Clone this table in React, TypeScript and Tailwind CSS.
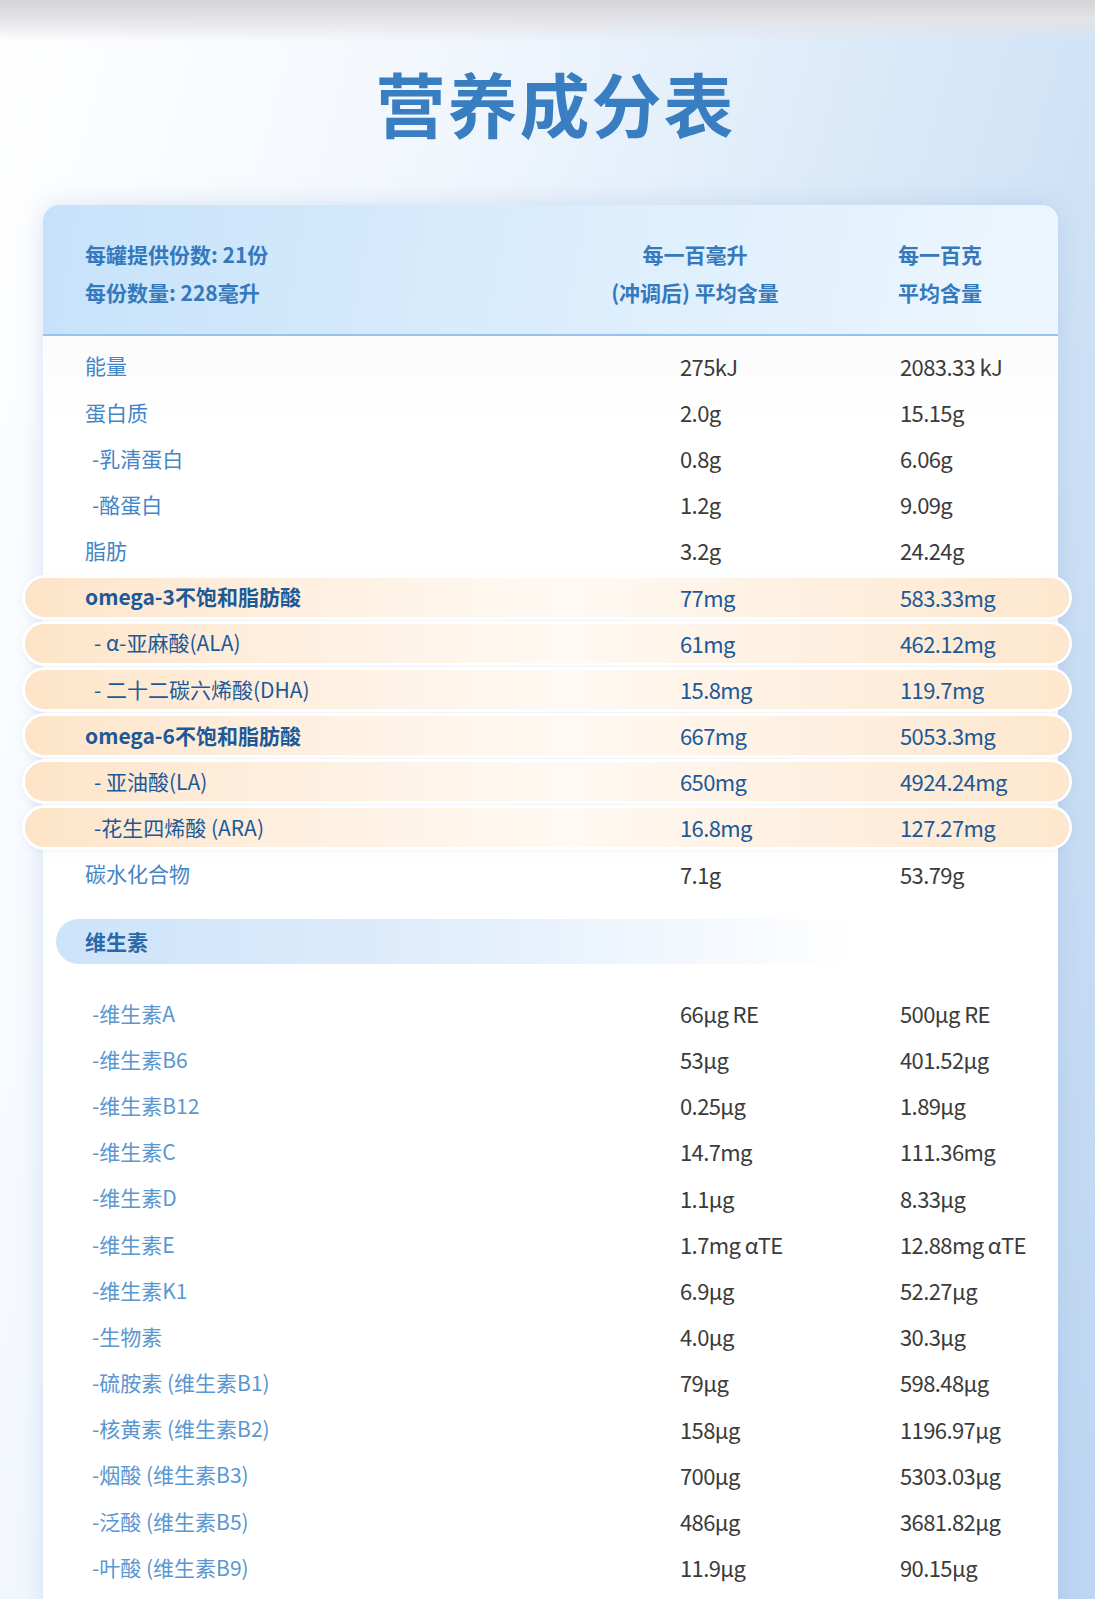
import React from "react";

type Row = {
  label: string;
  per100ml: string;
  per100g: string;
  indent?: boolean;
  bold?: boolean;
};

const nutrients: Row[] = [
  { label: "能量", per100ml: "275kJ", per100g: "2083.33 kJ" },
  { label: "蛋白质", per100ml: "2.0g", per100g: "15.15g" },
  { label: "-乳清蛋白", per100ml: "0.8g", per100g: "6.06g", indent: true },
  { label: "-酪蛋白", per100ml: "1.2g", per100g: "9.09g", indent: true },
  { label: "脂肪", per100ml: "3.2g", per100g: "24.24g" },
];

const fattyAcids: Row[] = [
  { label: "omega-3不饱和脂肪酸", per100ml: "77mg", per100g: "583.33mg", bold: true },
  { label: "- α-亚麻酸(ALA)", per100ml: "61mg", per100g: "462.12mg", indent: true },
  { label: "- 二十二碳六烯酸(DHA)", per100ml: "15.8mg", per100g: "119.7mg", indent: true },
  { label: "omega-6不饱和脂肪酸", per100ml: "667mg", per100g: "5053.3mg", bold: true },
  { label: "- 亚油酸(LA)", per100ml: "650mg", per100g: "4924.24mg", indent: true },
  { label: "-花生四烯酸 (ARA)", per100ml: "16.8mg", per100g: "127.27mg", indent: true },
];

const vitamins: Row[] = [
  { label: "-维生素A", per100ml: "66μg RE", per100g: "500μg RE" },
  { label: "-维生素B6", per100ml: "53μg", per100g: "401.52μg" },
  { label: "-维生素B12", per100ml: "0.25μg", per100g: "1.89μg" },
  { label: "-维生素C", per100ml: "14.7mg", per100g: "111.36mg" },
  { label: "-维生素D", per100ml: "1.1μg", per100g: "8.33μg" },
  { label: "-维生素E", per100ml: "1.7mg αTE", per100g: "12.88mg αTE" },
  { label: "-维生素K1", per100ml: "6.9μg", per100g: "52.27μg" },
  { label: "-生物素", per100ml: "4.0μg", per100g: "30.3μg" },
  { label: "-硫胺素 (维生素B1)", per100ml: "79μg", per100g: "598.48μg" },
  { label: "-核黄素 (维生素B2)", per100ml: "158μg", per100g: "1196.97μg" },
  { label: "-烟酸 (维生素B3)", per100ml: "700μg", per100g: "5303.03μg" },
  { label: "-泛酸 (维生素B5)", per100ml: "486μg", per100g: "3681.82μg" },
  { label: "-叶酸 (维生素B9)", per100ml: "11.9μg", per100g: "90.15μg" },
];

const PlainRow = ({ row, labelColor }: { row: Row; labelColor: string }) => (
  <div className="grid grid-cols-[595px_220px_1fr] items-center h-[46.2px] pl-[42px]">
    <div className={`text-[21px] ${labelColor} ${row.indent ? "pl-[7px]" : ""}`}>{row.label}</div>
    <div className="text-[22px] text-[#3b3b3b] tracking-[-0.6px]">{row.per100ml}</div>
    <div className="text-[22px] text-[#3b3b3b] tracking-[-0.6px]">{row.per100g}</div>
  </div>
);

const HighlightRow = ({ row }: { row: Row }) => (
  <div className="h-[46.2px] flex items-center -ml-[18px] -mr-[11px]">
    <div className="w-full h-[39px] rounded-full grid grid-cols-[595px_220px_1fr] items-center pl-[60px] bg-[linear-gradient(90deg,#fde4c8_0%,#feeedd_22%,#fff9f3_52%,#fef1e3_72%,#fde7ce_100%)] shadow-[0_0_0_3px_#ffffff,0_2px_10px_rgba(140,170,210,0.25)]">
      <div
        className={`text-[21px] text-[#1d5997] ${row.bold ? "font-semibold" : ""} ${row.indent ? "pl-[9px]" : ""}`}
      >
        {row.label}
      </div>
      <div className="text-[22px] text-[#1d5997] tracking-[-0.6px]">{row.per100ml}</div>
      <div className="text-[22px] text-[#1d5997] tracking-[-0.6px]">{row.per100g}</div>
    </div>
  </div>
);

const App = () => {
  return (
    <div className="w-[1095px] min-h-[1599px] overflow-hidden font-['Noto_Sans_CJK_SC','Noto_Sans',sans-serif] bg-[linear-gradient(105deg,#ffffff_0%,#f2f7fd_30%,#d8e8f8_62%,#bcd5f1_100%)]">
      {/* 顶部纹理条 */}
      <div className="h-[42px] bg-[linear-gradient(180deg,#d6d3d6_0%,#e4e3e7_45%,rgba(255,255,255,0)_100%)]" />

      <h1 className="mt-[26px] pl-[16px] text-center text-[70px] leading-[70px] font-bold text-[#3a7ec2] tracking-[2px]">
        营养成分表
      </h1>

      <div className="mt-[67px] ml-[43px] w-[1015px] rounded-[16px] bg-[linear-gradient(180deg,#f6f6fa_0%,#ffffff_220px)] shadow-[0_0_24px_rgba(120,160,210,0.25)] pb-[40px]">
        {/* 表头 */}
        <div className="flex rounded-t-[16px] pl-[42px] pt-[30px] pb-[23px] border-b-2 border-[#94c4ec] bg-[linear-gradient(100deg,#c6e2fa_0%,#d9ecfc_45%,#edf6fe_100%)] text-[21px] leading-[38px] font-bold text-[#3579bd]">
          <div className="w-[500px]">
            <div>每罐提供份数: 21份</div>
            <div>每份数量: 228毫升</div>
          </div>
          <div className="w-[220px] text-center">
            <div>每一百毫升</div>
            <div>(冲调后) 平均含量</div>
          </div>
          <div className="ml-[93px]">
            <div>每一百克</div>
            <div>平均含量</div>
          </div>
        </div>

        <div className="pt-[7px]">
          {nutrients.map((row) => (
            <PlainRow key={row.label} row={row} labelColor="text-[#4485c6]" />
          ))}
          {fattyAcids.map((row) => (
            <HighlightRow key={row.label} row={row} />
          ))}
          <PlainRow row={{ label: "碳水化合物", per100ml: "7.1g", per100g: "53.79g" }} labelColor="text-[#4485c6]" />
        </div>

        {/* 维生素 */}
        <div className="mt-[22px] ml-[13px] w-[800px] h-[45px] rounded-l-full flex items-center pl-[29px] bg-[linear-gradient(90deg,#cde3fa_0%,#dcebfb_40%,#ffffff_100%)] text-[21px] font-bold text-[#2a69a8]">
          维生素
        </div>

        <div className="pt-[26px]">
          {vitamins.map((row) => (
            <PlainRow key={row.label} row={{ ...row, indent: true }} labelColor="text-[#5a96cf]" />
          ))}
        </div>
      </div>
    </div>
  );
};

export default App;
